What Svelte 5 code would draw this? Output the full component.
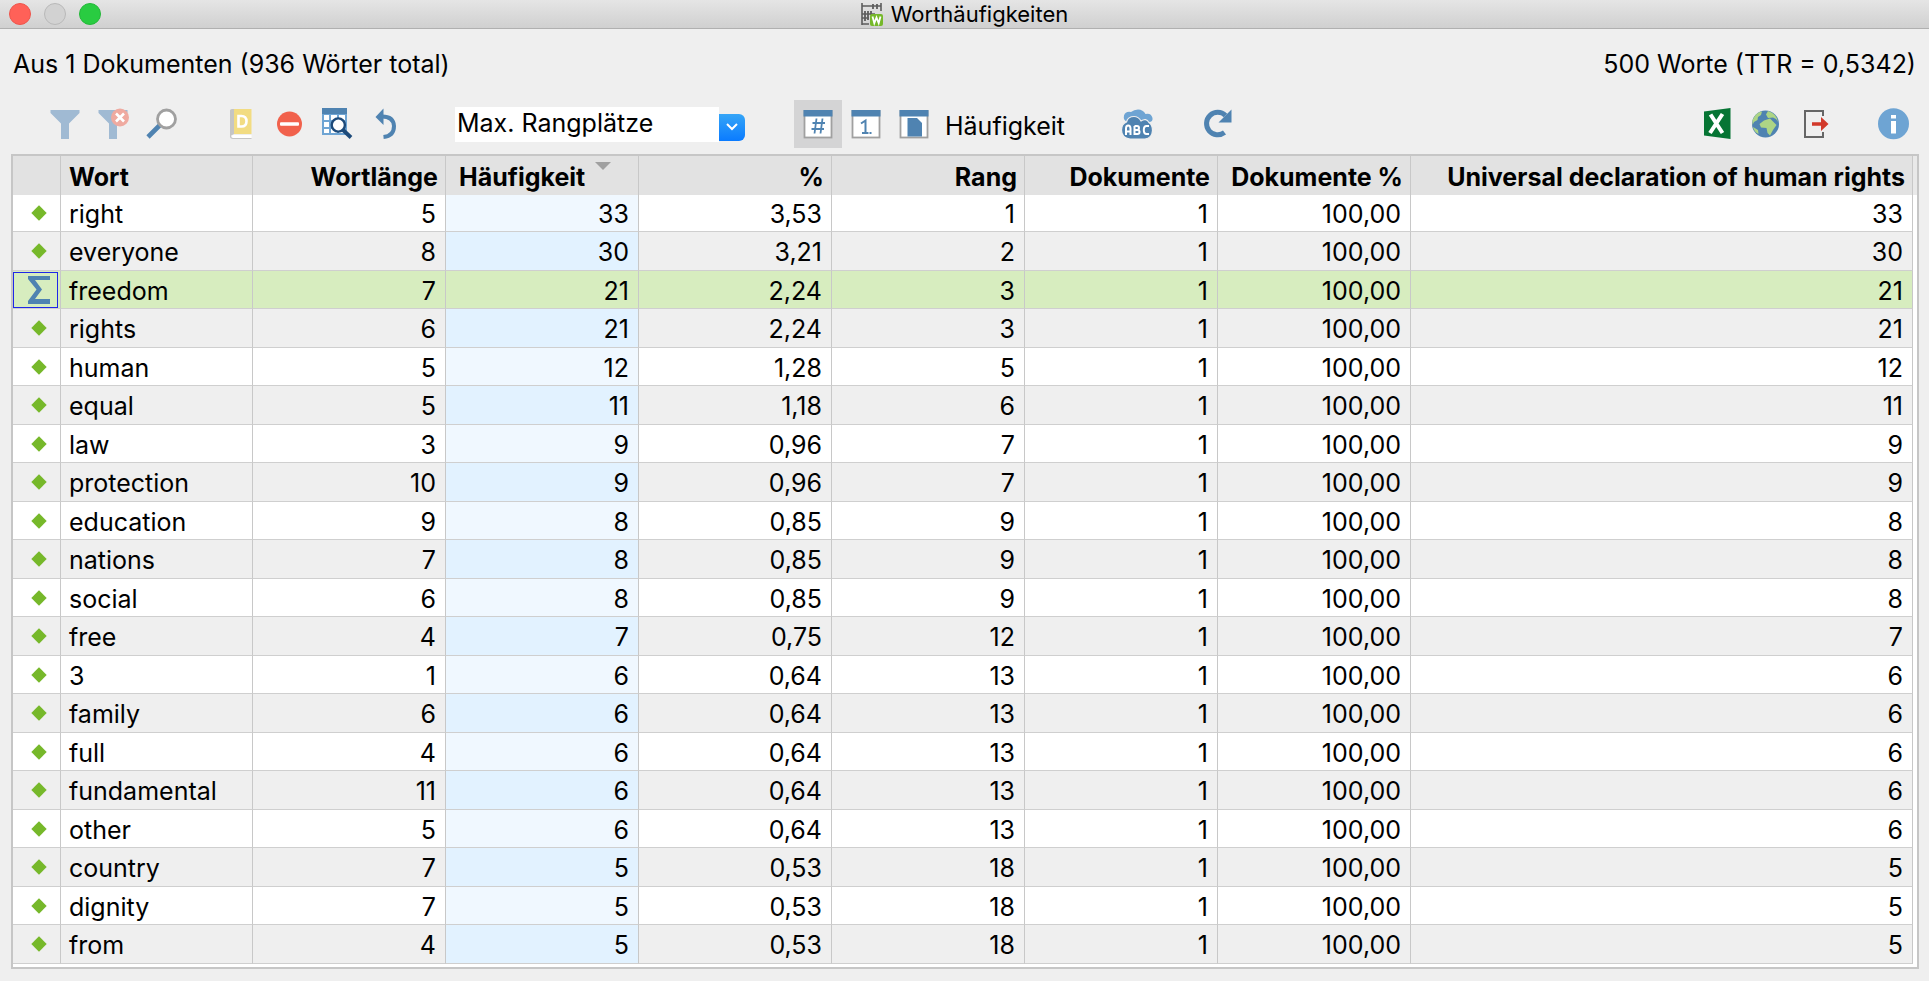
<script>
  const columns = ['Wort', 'Wortlänge', 'Häufigkeit', '%', 'Rang', 'Dokumente', 'Dokumente %', 'Universal declaration of human rights'];

  const words = [
    ['right', 5, 33, '3,53', 1],
    ['everyone', 8, 30, '3,21', 2],
    ['freedom', 7, 21, '2,24', 3],
    ['rights', 6, 21, '2,24', 3],
    ['human', 5, 12, '1,28', 5],
    ['equal', 5, 11, '1,18', 6],
    ['law', 3, 9, '0,96', 7],
    ['protection', 10, 9, '0,96', 7],
    ['education', 9, 8, '0,85', 9],
    ['nations', 7, 8, '0,85', 9],
    ['social', 6, 8, '0,85', 9],
    ['free', 4, 7, '0,75', 12],
    ['3', 1, 6, '0,64', 13],
    ['family', 6, 6, '0,64', 13],
    ['full', 4, 6, '0,64', 13],
    ['fundamental', 11, 6, '0,64', 13],
    ['other', 5, 6, '0,64', 13],
    ['country', 7, 5, '0,53', 18],
    ['dignity', 7, 5, '0,53', 18],
    ['from', 4, 5, '0,53', 18]
  ];

  let selected = $state(2);
</script>

<div class="window">
  <header class="titlebar">
    <div class="lights">
      <button class="light close" aria-label="Schließen"></button>
      <button class="light minimize" aria-label="Minimieren"></button>
      <button class="light zoom" aria-label="Vergrößern"></button>
    </div>
    <h1>
      <svg width="22" height="23" viewBox="0 0 22 23" aria-hidden="true">
        <path d="M1 0V22M20 0V8M1 3H20M1 11H14M1 15H8M1 21H8" fill="none" stroke="#5c5c5c" stroke-width="1.6" />
        <path d="M12 1V6M16 1V6M4 8V13M7 8V13M10 8V12M4 13V18M7 13V17" stroke="#5c5c5c" stroke-width="1.8" />
        <rect x="9" y="11" width="13" height="12" rx="2" fill="#76b82a" />
        <path d="M11.5 13.5L13.3 20.2L15.5 14.5L17.7 20.2L19.5 13.5" fill="none" stroke="#fff" stroke-width="1.8" />
      </svg>
      Worthäufigkeiten
    </h1>
  </header>

  <div class="summary">
    <span>Aus 1 Dokumenten (936 Wörter total)</span>
    <span>500 Worte (TTR = 0,5342)</span>
  </div>

  <div class="toolbar">
    <div class="group">
      <button aria-label="Filter">
        <svg width="32" height="32" viewBox="0 0 32 32"><path d="M1.5 2H30.5V5L20 15.5V31H12V15.5L1.5 5Z" fill="#a0bad3" /></svg>
      </button>
      <button aria-label="Filter zurücksetzen">
        <svg width="32" height="32" viewBox="0 0 32 32">
          <path d="M1.5 2H30.5V5L20 15.5V31H12V15.5L1.5 5Z" fill="#a0bad3" />
          <circle cx="23" cy="9.5" r="9" fill="#efaaa0" />
          <path d="M19 5.5L27 13.5M27 5.5L19 13.5" stroke="#fff" stroke-width="2.6" />
        </svg>
      </button>
      <button aria-label="Suchen">
        <svg width="32" height="32" viewBox="0 0 32 32">
          <path d="M14.500 17.500L3 29" stroke="#4f83b1" stroke-width="4.6" />
          <circle cx="21.5" cy="11" r="9" fill="#fff" stroke="#a0a0a0" stroke-width="2.8" />
        </svg>
      </button>
    </div>

    <div class="group">
      <button aria-label="Diktionär">
        <svg width="32" height="32" viewBox="0 0 32 32">
          <path d="M5 2.5Q5 1 7 1H9V26Q6 27 5 29Z" fill="#c5c5c5" />
          <path d="M9 1H26.5V26H9Z" fill="#f2dc82" />
          <path d="M26.5 27H8.5Q6.5 27 6.5 28.5T8.5 30H26.5Z" fill="#fff" />
          <path d="M26.5 30.5H8Q5.5 30.5 5.5 28" fill="none" stroke="#c5c5c5" stroke-width="1.2" />
          <path d="M13.5 8V18.5H16.5Q21.5 18.5 21.5 13.25T16.5 8Z" fill="none" stroke="#fff" stroke-width="2.6" />
        </svg>
      </button>
      <button aria-label="Stopp-Liste">
        <svg width="32" height="32" viewBox="0 0 32 32">
          <circle cx="16.5" cy="16" r="12.5" fill="#f1614c" />
          <rect x="7" y="14.3" width="19" height="3.4" rx="1" fill="#fff" />
        </svg>
      </button>
      <button aria-label="Wortkombinationen">
        <svg width="32" height="32" viewBox="0 0 32 32">
          <rect x="1" y="0" width="25" height="27" fill="#6ea4d3" />
          <rect x="1" y="0" width="25" height="6" fill="#4f83b1" />
          <path d="M3 7H8V12H3ZM10 7H16V12H10ZM18 7H24V12H18ZM3 14H8V19H3ZM10 14H16V19H10ZM3 21H8V25H3ZM10 21H16V25H10ZM18 14H24V19H18ZM18 21H24V25H18Z" fill="#fff" />
          <path d="M21.5 21.5L30 29.5" stroke="#1d4a7a" stroke-width="3.8" />
          <circle cx="17.3" cy="17" r="6.6" fill="#fff" stroke="#1d4a7a" stroke-width="2.4" />
        </svg>
      </button>
      <button aria-label="Rückgängig">
        <svg width="32" height="32" viewBox="0 0 32 32">
          <path d="M13 8.500Q24.500 8.500 25 18Q25 28 14.500 29" fill="none" stroke="#4f83b1" stroke-width="4" />
          <path d="M6.500 9L14.500 0.500V17Z" fill="#4f83b1" />
        </svg>
      </button>
    </div>

    <div class="combo">
      <select aria-label="Rangplätze">
        <option>Max. Rangplätze</option>
      </select>
      <span class="arrow">
        <svg width="12" height="8" viewBox="0 0 12 8" aria-hidden="true"><path d="M1 1L6 6L11 1" fill="none" stroke="#fff" stroke-width="2" /></svg>
      </span>
    </div>

    <div class="group display">
      <button class="active" aria-label="Häufigkeit" aria-pressed="true">
        <svg width="32" height="32" viewBox="0 0 32 32">
          <rect x="2.5" y="3" width="27" height="26.5" fill="#fff" stroke="#a0a0a0" stroke-width="1.8" />
          <rect x="1.5" y="2" width="29" height="6.5" fill="#4f83b1" />
          <path d="M14.500 10.500L12.500 25.500M20.500 10.500L18.500 25.500M10.500 15H23M9.500 21H22" stroke="#4f83b1" stroke-width="1.8" />
        </svg>
      </button>
      <button aria-label="Rang">
        <svg width="32" height="32" viewBox="0 0 32 32">
          <rect x="2.5" y="3" width="27" height="26.5" fill="#fff" stroke="#a0a0a0" stroke-width="1.8" />
          <rect x="1.5" y="2" width="29" height="6.5" fill="#4f83b1" />
          <path d="M11 15.500L15.500 12.500V26M12 25H18.500M19.500 25H21.500" fill="none" stroke="#4f83b1" stroke-width="2" />
        </svg>
      </button>
      <button aria-label="Dokumente">
        <svg width="32" height="32" viewBox="0 0 32 32">
          <rect x="2.5" y="3" width="27" height="26.5" fill="#fff" stroke="#a0a0a0" stroke-width="1.8" />
          <rect x="1.5" y="2" width="29" height="6.5" fill="#4f83b1" />
          <path d="M9.500 10H19L24 15V28.500H9.500Z" fill="#4f83b1" />
        </svg>
      </button>
      <span class="mode">Häufigkeit</span>
    </div>

    <div class="group">
      <button aria-label="Wortwolke">
        <svg width="32" height="32" viewBox="0 0 32 32">
          <path d="M6 14Q2 12 3 7.500Q4.500 3 10 4Q13 1.500 17 1.500Q22 1.500 24.500 6Q30 4.500 31.500 10Q32 14 28 14Z" fill="#6ea4d3" />
          <path d="M9 31Q0.500 30 0.500 22Q0.500 16 5.500 14Q7 8.500 13 8.500Q17.500 8.500 20 13Q25 9.500 28 14.500Q31.500 17 31.500 22.500Q31 30.500 24 31Z" fill="#4f83b1" stroke="#efefef" stroke-width="1.2" />
          <path d="M5 27V20.500Q5 17.500 7.200 17.500T9.500 20.500V27M5 23.500H9.500M13.500 18V26H16.500Q18.500 26 18.500 24T16.500 22H13.500M16 22Q18 22 18 20T16 18H13.500M28 18H25.500Q22.800 18 22.800 22T25.500 26H28" fill="none" stroke="#fff" stroke-width="2" />
        </svg>
      </button>
    </div>
    <div class="group">
      <button aria-label="Aktualisieren">
        <svg width="32" height="32" viewBox="0 0 32 32">
          <path d="M24.500 7.500A11.200 11.200 0 1 0 23.500 24.500" fill="none" stroke="#4f83b1" stroke-width="5" />
          <path d="M30.500 1.500V14.500H17.500Z" fill="#4f83b1" />
        </svg>
      </button>
    </div>

    <div class="group export">
      <button aria-label="Als Excel-Tabelle öffnen">
        <svg width="32" height="32" viewBox="0 0 32 32">
          <path d="M3 3.500L29.500 0V31L3 27.500Z" fill="#067534" />
          <path d="M9.500 6.500L21.500 25M21.500 6L9 25" stroke="#fff" stroke-width="4" />
        </svg>
      </button>
      <button aria-label="Als Webseite öffnen">
        <svg width="32" height="32" viewBox="0 0 32 32">
          <circle cx="16.500" cy="16" r="13.500" fill="#4f83b1" />
          <path d="M3.500 12Q7 4 13 3.500L12 7L9 9L8.500 12L5 14L3.500 17ZM4 19L9 22L9.500 26Q5 24 4 19Z" fill="#add585" />
          <path d="M19 3Q28 6 29 14L27 11L24 9.500L19 10L17 6.500ZM15 12.500L21 10.500L25.500 15L27.500 17L24 22L21 27.500L18.500 25L17.500 20L12 19.500L10.500 16Z" fill="#add585" />
        </svg>
      </button>
      <button aria-label="Exportieren">
        <svg width="32" height="32" viewBox="0 0 32 32">
          <path d="M26 8V3H8V29H26V24" fill="none" stroke="#666" stroke-width="2" />
          <path d="M15 14.200H24V9L31.500 16L24 23V17.800H15Z" fill="#d2392a" />
        </svg>
      </button>
    </div>
    <div class="group">
      <button aria-label="Info">
        <svg width="32" height="32" viewBox="0 0 32 32">
          <circle cx="16.5" cy="15.8" r="15.5" fill="#6ea4d3" />
          <path d="M14 7H19V10.500H14ZM14 13H19V25.500H14Z" fill="#fff" />
        </svg>
      </button>
    </div>
  </div>

  <main>
    <table>
      <colgroup>
        <col class="c-mark" />
        <col class="c-word" />
        {#each Array(6) as _}<col class="c-value" />{/each}
        <col />
      </colgroup>
      <thead>
        <tr>
          <th aria-label="Markierung"></th>
          {#each columns as name, i}
            <th scope="col" class:left={i === 0} class:sorting={i === 2} aria-sort={i === 2 ? 'descending' : undefined}>
              {name}{#if i === 2}<span class="sort"></span>{/if}
            </th>
          {/each}
        </tr>
      </thead>
      <tbody>
        {#each words as [word, length, count, percent, rank], i}
          <tr class:selected={i === selected} onclick={() => (selected = i)}>
            <td class="mark">
              {#if i === selected}
                <span class="focus">
                  <svg width="24" height="28" viewBox="0 0 24 28" aria-hidden="true"><path d="M1 0H23V4H8L15 13.500L8 23H23V28H1V25L9.500 13.500L1 3Z" fill="#4f83b1" /></svg>
                </span>
              {:else}
                <svg class="diamond" width="16" height="16" viewBox="0 0 16 16" aria-hidden="true"><path d="M8 0.300L15.700 8L8 15.700L0.300 8Z" fill="#76b82a" /></svg>
              {/if}
            </td>
            <td class="left">{word}</td>
            <td>{length}</td>
            <td class="sorted">{count}</td>
            <td>{percent}</td>
            <td>{rank}</td>
            <td>1</td>
            <td>100,00</td>
            <td>{count}</td>
          </tr>
        {/each}
      </tbody>
    </table>
  </main>
</div>

<style>
  :global(body) {
    background: #efefef;
  }

  .window {
    min-height: 100vh;
    box-sizing: border-box;
    padding-bottom: 11px;
    background: #efefef;
    color: #000;
    font: 25px/30px Inter, "Liberation Sans", sans-serif;
  }

  .titlebar {
    display: grid;
    grid-template-columns: 1fr auto 1fr;
    align-items: center;
    height: 28px;
    border-bottom: 1px solid #b0b0b0;
    background: linear-gradient(#e5e5e5, #d0d0d0);
  }

  .lights {
    display: flex;
    gap: 13px;
    padding-left: 9px;
  }

  .light {
    width: 22px;
    height: 22px;
    padding: 0;
    border: 1px solid;
    border-radius: 50%;
  }

  .close {
    background: #ff6158;
    border-color: #ee554c;
  }

  .minimize {
    background: #d2d2d2;
    border-color: #b9b9b9;
  }

  .zoom {
    background: #29cc41;
    border-color: #24b839;
  }

  h1 {
    display: flex;
    align-items: center;
    gap: 8px;
    margin: 0;
    font-size: 22px;
    font-weight: 400;
    line-height: 28px;
  }

  .summary {
    display: flex;
    justify-content: space-between;
    padding: 20px 13px 0;
  }

  .toolbar {
    display: flex;
    align-items: center;
    gap: 32px;
    padding: 21px 12px 6px 41px;
  }

  .group {
    display: flex;
    align-items: center;
  }

  .group button {
    display: flex;
    align-items: center;
    justify-content: center;
    width: 48px;
    height: 48px;
    padding: 0;
    border: 0;
    background: none;
  }

  .group button.active {
    background: #d4d4d5;
  }

  .combo {
    display: flex;
    align-items: center;
    margin: 0 17px 0 14px;
  }

  select {
    width: 264px;
    height: 35px;
    padding: 0 2px 2px;
    border: 0;
    appearance: none;
    background: #fff;
    color: #000;
    font: inherit;
  }

  .arrow {
    display: flex;
    align-items: center;
    justify-content: center;
    width: 26px;
    height: 27px;
    margin-top: 6px;
    border-radius: 0 6px 6px 0;
    background: linear-gradient(#35a5f7, #0a7bff);
  }

  .mode {
    min-width: 136px;
    padding: 4px 0 0 7px;
  }

  .export {
    margin-left: auto;
  }

  main {
    margin: 0 10px 0 11px;
    padding-bottom: 3px;
    border: 2px solid #c6c6c6;
    background: #fff;
  }

  table {
    width: calc(100% - 4px);
    border-spacing: 0;
    table-layout: fixed;
  }

  .c-mark {
    width: 48px;
  }

  .c-word {
    width: 192px;
  }

  .c-value {
    width: 193px;
  }

  th,
  td {
    padding: 2px 9px 0;
    border-right: 1px solid #c8c8c8;
    overflow: hidden;
    text-align: right;
    white-space: nowrap;
  }

  th {
    height: 37px;
    padding: 2px 7px 0;
    background: #e2e2e2;
    font-weight: 700;
  }

  thead {
    box-shadow: 4px 0 #e9e9e9;
  }

  th.left,
  td.left {
    padding-left: 8px;
    text-align: left;
  }

  th.sorting {
    padding-left: 13px;
    text-align: left;
  }

  .sort {
    display: inline-block;
    margin-left: 10px;
    border: 8px solid transparent;
    border-top-color: #a0a0a0;
    border-bottom: 0;
    vertical-align: top;
  }

  td {
    height: 35px;
    border-bottom: 1px solid #cfcfcf;
  }

  tr:nth-child(even) td {
    height: 36px;
    background: #efefef;
  }

  tr:first-child td {
    height: 34px;
  }

  td.sorted {
    background: #f0f8ff;
  }

  tr:nth-child(even) td.sorted {
    background: #e2f2ff;
  }

  tbody tr.selected td {
    background: #d7edbf;
  }

  tr td.mark {
    padding: 0;
  }

  .diamond {
    display: block;
    margin: 0 auto;
    padding-left: 5px;
  }

  .focus {
    display: flex;
    align-items: center;
    justify-content: center;
    box-sizing: border-box;
    width: calc(100% - 2px);
    height: 36px;
    padding-left: 6px;
    border: 1px solid #1f27e8;
  }
</style>
